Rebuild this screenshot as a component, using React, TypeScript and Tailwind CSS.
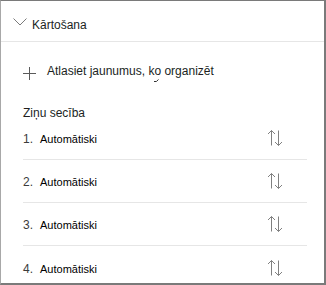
import React from "react";

const font = { fontFamily: '"Liberation Sans", Arial, sans-serif' };

function Chevron() {
  return (
    <svg width="14" height="8" viewBox="0 0 14 8" className="shrink-0">
      <path d="M0.5 0.5 L7 7 L13.5 0.5" fill="none" stroke="#7a7a7a" strokeWidth="1" />
    </svg>
  );
}

function Plus() {
  return (
    <svg width="13" height="13" viewBox="0 0 13 13" className="shrink-0 mt-[3px]">
      <path d="M6.5 0 V13 M0 6.5 H13" fill="none" stroke="#5a5a5a" strokeWidth="1" />
    </svg>
  );
}

function SortIcon() {
  return (
    <svg width="16" height="16" viewBox="0 0 16 16" className="shrink-0">
      <g fill="none" stroke="#808080" strokeWidth="1">
        <path d="M4.5 0.5 V15.5" />
        <path d="M1 4 L4.5 0.5 L8 4" />
        <path d="M11.5 0.5 V15.5" />
        <path d="M8 12 L11.5 15.5 L15 12" />
      </g>
    </svg>
  );
}

const rows = ["Automātiski", "Automātiski", "Automātiski", "Automātiski"];

export default function App() {
  return (
    <div
      className="w-[326px] h-[285px] bg-white border-t border-l border-r-2 border-b-2 border-t-[#7a7a7a] border-l-[#a8a8a8] border-r-[#7a7a7a] border-b-[#7a7a7a] overflow-hidden"
      style={font}
    >
      {/* header */}
      <div className="h-[41px] border-b border-[#e6e6e6] flex items-start pt-[17px] pl-[12px] gap-[5px]">
        <Chevron />
        <span className="text-[12px] leading-[14px] text-[#201f1e]">Kārtošana</span>
      </div>

      {/* add news */}
      <div className="flex items-start pl-[22px] pt-[22px] gap-[11px]">
        <Plus />
        <span className="text-[12px] leading-[14px] text-[#201f1e]">
          Atlasiet jaunumus,{" "}
          <span className="relative">
            ko
            <svg width="5" height="4" viewBox="0 0 5 4" className="absolute left-[6px] top-[15px]">
              <path d="M0 2.5 Q2.5 3.5 4.5 0.5" fill="none" stroke="#333" strokeWidth="1" />
            </svg>
          </span>{" "}
          organizēt
        </span>
      </div>

      {/* order */}
      <div className="pl-[22px] pt-[26px] text-[12px] leading-[14px] text-[#201f1e]">Ziņu secība</div>

      <div className="ml-[22px] w-[284px] -mt-[3px]">
        {rows.map((r, i) => (
          <div
            key={i}
            className={
              "h-[43px] flex items-center pr-[24px] " +
              (i < rows.length - 1 ? "border-b border-[#e6e6e6]" : "")
            }
          >
            <div className="flex items-baseline pt-[3px]">
              <span className="w-[17px] text-[12px] leading-[13px] text-[#3b3b3b]">{i + 1}.</span>
              <span className="text-[11px] leading-[13px] text-black">{r}</span>
            </div>
            <div className="flex-1" />
            <SortIcon />
          </div>
        ))}
      </div>
    </div>
  );
}
